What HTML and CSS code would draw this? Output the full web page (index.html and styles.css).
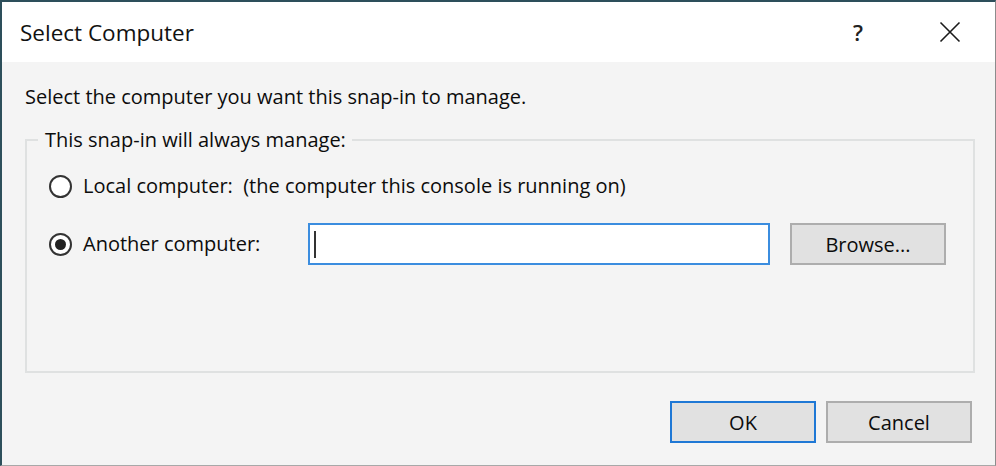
FILE: index.html
```html
<!DOCTYPE html>
<html lang="en">
<head>
<meta charset="utf-8">
<title>Select Computer</title>
<link rel="stylesheet" href="styles.css">
</head>
<body>
<div class="window">
  <div class="titlebar">
    <div class="title">Select Computer</div>
    <div class="caption-buttons">
      <div class="cap-btn help">?</div>
      <div class="cap-btn close">
        <svg width="22" height="22" viewBox="0 0 22 22"><path d="M1.5 1.5 L20.5 20.5 M20.5 1.5 L1.5 20.5" stroke="#1a1a1a" stroke-width="1.6" fill="none"/></svg>
      </div>
    </div>
  </div>
  <div class="content">
    <div class="intro">Select the computer you want this snap-in to manage.</div>
    <fieldset class="group">
      <legend class="group-label">This snap-in will always manage:</legend>
      <div class="group-body">
        <div class="row row-local">
          <span class="radio"></span>
          <span class="radio-label">Local computer:&nbsp; (the computer this console is running on)</span>
        </div>
        <div class="row row-another">
          <div class="radio-cell">
            <span class="radio checked"><span class="dot"></span></span>
            <span class="radio-label">Another computer:</span>
          </div>
          <div class="textbox"><span class="caret"></span></div>
          <div class="btn browse">Browse...</div>
        </div>
      </div>
    </fieldset>
    <div class="actions">
      <div class="btn default">OK</div>
      <div class="btn">Cancel</div>
    </div>
  </div>
</div>
</body>
</html>
```
FILE: styles.css
```css
html, body {
  margin: 0;
  padding: 0;
  background: #f4f4f4;
}
body {
  font-family: "Open Sans", "Noto Sans", "Liberation Sans", sans-serif;
  color: #0c0c0c;
}
.window {
  width: 996px;
  height: 466px;
  box-sizing: border-box;
  border-top: 2px solid #2d4f5b;
  border-left: 2px solid #2d4f5b;
  border-right: 1px solid #8c8c8c;
  border-bottom: 1px solid #a8a8a8;
  display: flex;
  flex-direction: column;
  background: #f4f4f4;
}
.titlebar {
  height: 60px;
  background: #ffffff;
  display: flex;
  align-items: center;
  justify-content: space-between;
  flex-shrink: 0;
}
.title {
  padding-left: 18px;
  font-size: 22.5px;
  line-height: 28px;
  margin-top: 2px;
  color: #111;
}
.caption-buttons {
  display: flex;
  height: 100%;
}
.cap-btn {
  width: 92px;
  height: 100%;
  display: flex;
  align-items: center;
  justify-content: center;
}
.cap-btn.help {
  font-size: 22px;
  font-weight: 600;
  color: #222;
  padding-bottom: 1px;
  box-sizing: border-box;
}
.cap-btn.close {
  width: 91px;
}
.content {
  flex: 1;
  padding: 22px 20px 0 23px;
  display: flex;
  flex-direction: column;
}
.intro {
  font-size: 20px;
  line-height: 26px;
}
.group {
  margin: 17px 0 0 0;
  padding: 0;
  border: 2px solid #dfe1e1;
  min-width: 0;
}
.group-label {
  margin-left: 11px;
  padding: 0 6px 0 7px;
  font-size: 20px;
  line-height: 26px;
}
.group-body {
  padding: 16px 0 106px 22px;
  display: flex;
  flex-direction: column;
  gap: 20px;
}
.row {
  display: flex;
  align-items: center;
  font-size: 20px;
}
.row-local {
  height: 34px;
}
.row-another {
  height: 42px;
}
.radio-cell {
  width: 259px;
  display: flex;
  align-items: center;
}
.radio {
  width: 23px;
  height: 23px;
  box-sizing: border-box;
  border: 2px solid #333;
  border-radius: 50%;
  background: #fff;
  margin-right: 11px;
  display: flex;
  align-items: center;
  justify-content: center;
  flex-shrink: 0;
}
.dot {
  width: 11px;
  height: 11px;
  border-radius: 50%;
  background: #222;
}
.radio-label {
  line-height: 26px;
  white-space: pre;
}
.textbox {
  width: 462px;
  height: 42px;
  box-sizing: border-box;
  border: 2px solid #3b8ddf;
  background: #fff;
  display: flex;
  align-items: center;
  padding-left: 4px;
}
.caret {
  width: 2px;
  height: 27px;
  background: #333;
}
.btn {
  width: 146px;
  height: 42px;
  box-sizing: border-box;
  border: 2px solid #adadad;
  background: #e1e1e1;
  display: flex;
  align-items: center;
  justify-content: center;
  font-size: 20px;
}
.btn.browse {
  width: 156px;
  margin-left: 20px;
}
.btn.default {
  border-color: #1f78d5;
}
.actions {
  display: flex;
  justify-content: flex-end;
  gap: 10px;
  margin-top: 28px;
  margin-right: 3px;
}
```
